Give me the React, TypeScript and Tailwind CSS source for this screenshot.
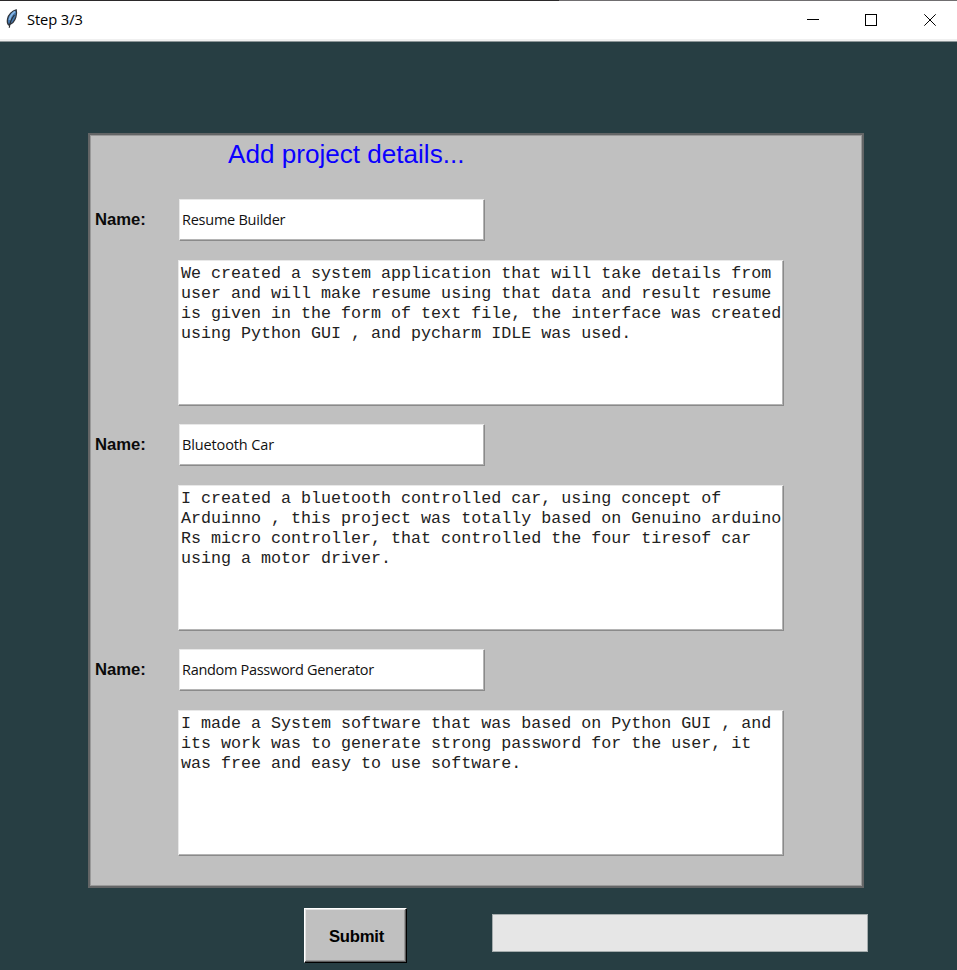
const projects = [
  {
    name: 'Resume Builder',
    lines: [
      'We created a system application that will take details from',
      'user and will make resume using that data and result resume',
      'is given in the form of text file, the interface was created',
      'using Python GUI , and pycharm IDLE was used.',
    ],
    tracking: 'tracking-[-0.25px]',
  },
  {
    name: 'Bluetooth Car',
    lines: [
      'I created a bluetooth controlled car, using concept of',
      'Arduinno , this project was totally based on Genuino arduino',
      'Rs micro controller, that controlled the four tiresof car',
      'using a motor driver.',
    ],
    tracking: 'tracking-[-0.13px]',
  },
  {
    name: 'Random Password Generator',
    lines: [
      'I made a System software that was based on Python GUI , and',
      'its work was to generate strong password for the user, it',
      'was free and easy to use software.',
    ],
    tracking: 'tracking-[-0.3px]',
  },
];

function Feather() {
  return (
    <svg width="14" height="20" viewBox="0 0 14 20">
      <path d="M11.2 0.8 C7.5 1.5 3 6 2.5 10 C2 12.8 2.2 14.5 3.6 16 C6.5 15 9.8 12 10.9 8 C11.6 5 11.8 2.5 11.2 0.8Z" fill="#4478ae" stroke="#30343b" strokeWidth="1.2" />
      <path d="M10 2.5 C7.4 4.5 5 7.5 4.5 11" stroke="#86b5e4" strokeWidth="1.8" fill="none" />
      <path d="M9.4 6 C7 9 4.8 12.5 4.3 18.8" stroke="#292c31" strokeWidth="1.2" fill="none" />
    </svg>
  );
}

function TitleBar() {
  return (
    <header className="flex h-[42px] flex-col border-b border-[#8d9698] bg-white">
      <div className="flex h-px shrink-0">
        <div className="w-[559px] bg-[#2b292a]" />
        <div className="flex-1 bg-[#706e70]" />
      </div>
      <div className="flex h-[38px] items-center">
        <div className="flex w-[27px] pb-0.5 pl-[5px]">
          <Feather />
        </div>
        <div className="flex-1 pb-0.5 font-['Open_Sans','Noto_Sans',sans-serif] text-[14.7px] leading-5 tracking-[-0.1px] text-black">
          Step 3/3
        </div>
        <svg width="177" height="38" viewBox="0 0 177 38" fill="none" stroke="#000" shapeRendering="crispEdges">
          <path d="M27 18.5H39" />
          <rect x="85.5" y="13.5" width="11" height="11" />
          <path d="M144.3 13.3L155.7 24.7M155.7 13.3L144.3 24.7" shapeRendering="auto" />
        </svg>
      </div>
      <div className="h-0.5 bg-[#f0f0f0]" />
    </header>
  );
}

function Project({ name, lines, tracking }: { name: string; lines: string[]; tracking: string }) {
  return (
    <section className="h-[225px]">
      <div className="flex h-[42px] items-center">
        <div className="w-[88px] pl-1 font-['Liberation_Sans',Arial,sans-serif] text-[16.67px] leading-5 font-bold text-[#0b0b0b]">Name:</div>
        <div className="flex h-[42px] w-[306px] items-center border border-t-[#e8e8e8] border-r-[#8a8a8a] border-b-[#8a8a8a] border-l-[#e8e8e8] bg-white pb-px pl-0.5 font-['Open_Sans','Noto_Sans',sans-serif] text-[14.5px] leading-5 text-[#111] shadow-[inset_-1px_-1px_#b4b4b4]">
          <span className={tracking}>{name}</span>
        </div>
      </div>
      <div className="mt-[19px] ml-[87px] h-[146px] w-[606px] border border-t-[#e8e8e8] border-r-[#8a8a8a] border-b-[#8a8a8a] border-l-[#e8e8e8] bg-white pt-[3px] pl-0.5 font-['Liberation_Mono','Courier_New',monospace] text-[16.68px] leading-5 whitespace-pre text-[#222] shadow-[inset_-1px_-1px_#b4b4b4]">
        {lines.map((line) => (
          <div key={line}>{line}</div>
        ))}
      </div>
    </section>
  );
}

export default function App() {
  return (
    <div className="flex h-[970px] w-[957px] flex-col overflow-hidden bg-[#273e43]">
      <TitleBar />
      <main className="mt-[91px] ml-[88px] h-[755px] w-[776px] shrink-0 border-2 border-[#636566] bg-[#c0c0c0] pt-px pl-px shadow-[inset_0_0_0_1px_#999]">
        <h1 className="h-[63px] pl-[137px] font-['Liberation_Sans',Arial,sans-serif] text-[26.1px] leading-9 text-[#0b00ff]">
          Add project details...
        </h1>
        {projects.map((project) => (
          <Project key={project.name} {...project} />
        ))}
      </main>
      <footer className="mt-5 flex items-start pl-[304px]">
        <button className="flex h-[55px] w-[103px] items-center justify-center border border-t-white border-r-black border-b-black border-l-white bg-[#c0c0c0] pt-0.5 pl-0.5 font-['Liberation_Sans',Arial,sans-serif] text-[16.67px] leading-5 font-bold tracking-[-0.2px] text-black shadow-[inset_-1px_-1px_#5c5c5c,inset_1px_1px_#e3e3e3,inset_-2px_-2px_#999]">
          Submit
        </button>
        <div className="mt-1.5 ml-[85px] h-[38px] w-[376px] border border-[#a5acad] bg-[#e6e6e6]" />
      </footer>
    </div>
  );
}
